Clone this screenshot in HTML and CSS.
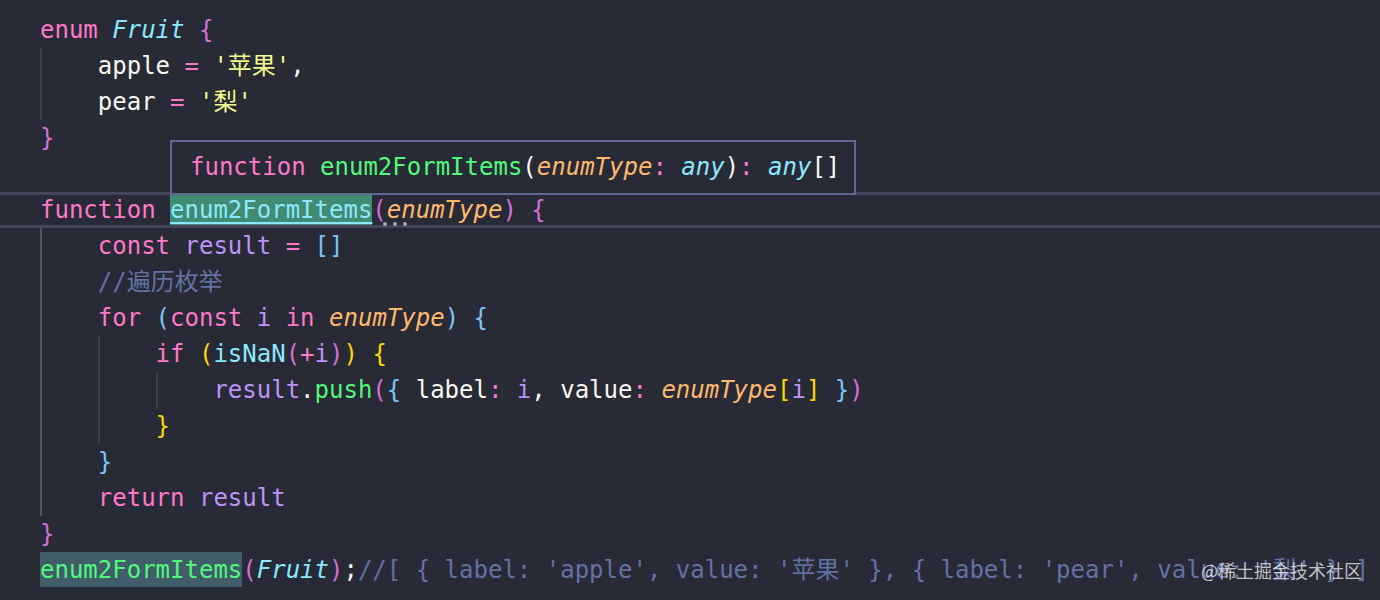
FILE: index.html
```html
<!DOCTYPE html>
<html lang="zh-CN">
<head>
<meta charset="utf-8">
<title>enum2FormItems</title>
<link rel="stylesheet" href="styles.css">
</head>
<body>
<div class="editor">
  <div class="line"><span class="k">enum</span> <span class="t">Fruit</span> <span class="b1">{</span></div>
  <div class="line"><span class="ind"></span>apple <span class="k">=</span> <span class="s">'苹果'</span>,</div>
  <div class="line"><span class="ind"></span>pear <span class="k">=</span> <span class="s">'梨'</span></div>
  <div class="line"><span class="b1">}</span></div>
  <div class="line"></div>
  <div class="line cur"><span class="k">function</span> <span class="hl-def">enum2FormItems</span><span class="b1">(</span><span class="p">enumType</span><span class="b1">)</span> <span class="b1">{</span><span class="dots"><i></i><i></i><i></i></span></div>
  <div class="line"><span class="ind a"></span><span class="k">const</span> <span class="v">result</span> <span class="k">=</span> <span class="b2">[]</span></div>
  <div class="line"><span class="ind a"></span><span class="c">//遍历枚举</span></div>
  <div class="line"><span class="ind a"></span><span class="k">for</span> <span class="b2">(</span><span class="k">const</span> <span class="v">i</span> <span class="k">in</span> <span class="p">enumType</span><span class="b2">)</span> <span class="b2">{</span></div>
  <div class="line"><span class="ind a"></span><span class="ind"></span><span class="k">if</span> <span class="b3">(</span><span class="t n">isNaN</span><span class="b1">(</span><span class="k">+</span><span class="v">i</span><span class="b1">)</span><span class="b3">)</span> <span class="b3">{</span></div>
  <div class="line"><span class="ind a"></span><span class="ind"></span><span class="ind"></span><span class="v">result</span>.<span class="f">push</span><span class="b1">(</span><span class="b2">{</span> label<span class="k">:</span> <span class="v">i</span>, value<span class="k">:</span> <span class="p">enumType</span><span class="b3">[</span><span class="v">i</span><span class="b3">]</span> <span class="b2">}</span><span class="b1">)</span></div>
  <div class="line"><span class="ind a"></span><span class="ind"></span><span class="b3">}</span></div>
  <div class="line"><span class="ind a"></span><span class="b2">}</span></div>
  <div class="line"><span class="ind a"></span><span class="k">return</span> <span class="v">result</span></div>
  <div class="line"><span class="b1">}</span></div>
  <div class="line"><span class="hl-ref">enum2FormItems</span><span class="b1">(</span><span class="t">Fruit</span><span class="b1">)</span>;<span class="c">//[ { label: 'apple', value: '苹果' }, { label: 'pear', value: '梨' } ]</span></div>

  <div class="hover"><span class="k">function</span> <span class="f">enum2FormItems</span>(<span class="p">enumType</span><span class="k">:</span> <span class="t">any</span>)<span class="k">:</span> <span class="t">any</span>[]</div>
  <div class="watermark">@稀土掘金技术社区</div>
</div>
</body>
</html>
```

FILE: styles.css
```css
html, body {
  margin: 0;
  padding: 0;
  height: 600px;
  overflow: hidden;
  background: #282a36;
}

.editor {
  position: relative;
  padding-top: 12px;
  font-family: "DejaVu Sans Mono", "Noto Sans CJK SC", monospace;
  font-size: 24px;
  color: #f8f8f2;
}

.line {
  height: 36px;
  line-height: 36px;
  padding-left: 40px;
  white-space: pre;
  box-sizing: border-box;
}

.line.cur {
  position: relative;
  border-top: 3px solid #44475a;
  border-bottom: 3px solid #44475a;
  line-height: 30px;
}

.ind {
  display: inline-block;
  width: 4ch;
  height: 36px;
  vertical-align: top;
  box-sizing: border-box;
  border-left: 2px solid #3d3f4e;
}

.ind.a {
  border-left-color: #555766;
}

.k { color: #ff79c6; }
.t { color: #8be9fd; font-style: italic; }
.t.n { font-style: normal; }
.s { color: #f1fa8c; }
.v { color: #bd93f9; }
.f { color: #50fa7b; }
.p { color: #ffb86c; font-style: italic; }
.c { color: #6272a4; }
.b1 { color: #d670d8; }
.b2 { color: #7cc5f7; }
.b3 { color: #ffd700; }

.hl-def {
  display: inline-block;
  line-height: 30px;
  background: #418b72;
  color: #8be9fd;
  text-decoration: underline;
  text-decoration-thickness: 2px;
  text-underline-offset: 4px;
}

.hl-ref {
  display: inline-block;
  height: 35px;
  line-height: 36px;
  vertical-align: top;
  background: #405d69;
  color: #50fa7b;
}

.dots {
  position: absolute;
  left: 383px;
  top: 27px;
  display: flex;
  gap: 6px;
}

.dots i {
  display: block;
  width: 4px;
  height: 4px;
  border-radius: 50%;
  background: #a2a4b0;
}

.hover {
  position: absolute;
  left: 170px;
  top: 140px;
  height: 51px;
  line-height: 51px;
  padding: 0 14px 0 18px;
  border: 2px solid #5e6a94;
  background: #282a36;
  white-space: pre;
}

.watermark {
  position: absolute;
  right: 18px;
  bottom: 6px;
  height: 24px;
  line-height: 24px;
  font-family: "Noto Sans CJK SC", "Noto Sans", sans-serif;
  font-size: 18px;
  color: rgba(255, 255, 255, 0.72);
  white-space: nowrap;
}
```
